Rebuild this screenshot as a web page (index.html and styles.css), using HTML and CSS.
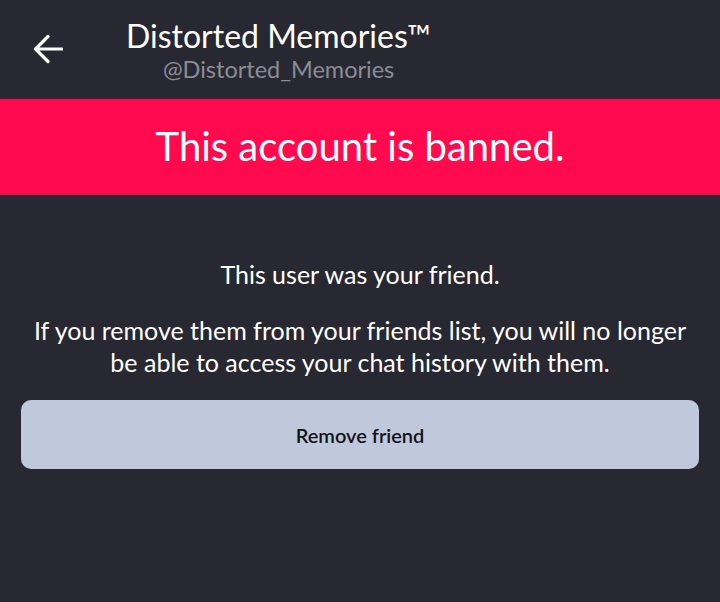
FILE: index.html
```html
<!DOCTYPE html>
<html>
  <head>
    <title>Distorted Memories</title>
    <meta charset='UTF-8'>
    <link rel="stylesheet" href="styles.css">
  </head>
  <body>
    <header class='topBar'>
      <button class='backButton' aria-label='Back'>
        <svg width='30' height='30' viewBox='0 0 30 30'>
          <path d='M29 15H2.5M15 2.5L2.5 15L15 27.5' fill='none' stroke='#fff' stroke-width='3.2' stroke-linecap='round' stroke-linejoin='round'/>
        </svg>
      </button>
      <div class='userInfo'>
        <h1 class='displayName'>Distorted Memories™</h1>
        <p class='handle'>@Distorted_Memories</p>
      </div>
    </header>

    <div class='bannedBanner'>This account is banned.</div>

    <main class='friendNotice'>
      <p class='noticeTitle'>This user was your friend.</p>
      <p class='noticeText'>If you remove them from your friends list, you will no longer be able to access your chat history with them.</p>
      <button class='removeButton'>Remove friend</button>
    </main>
  </body>
</html>
```

FILE: styles.css
```css
:root {
  font-family: Lato, "Noto Sans", sans-serif;
  background-color: #272832;
  color: #ffffff;
}

body {
  margin: 0;
  min-height: 100vh;
}

.topBar {
  display: flex;
  align-items: flex-start;
  height: 99px;
  box-sizing: border-box;
  padding-top: 17px;
}

.backButton {
  width: 30px;
  height: 30px;
  margin-left: 33px;
  margin-top: 17px;
  padding: 0;
  border: none;
  background: none;
}

.userInfo {
  margin-left: 63px;
  display: flex;
  flex-direction: column;
  align-items: center;
}

.displayName {
  margin: 0;
  font-size: 32px;
  font-weight: 400;
  line-height: 38px;
}

.handle {
  margin: 0;
  font-size: 23.5px;
  line-height: 28px;
  color: #8b8d96;
}

.bannedBanner {
  height: 96px;
  background-color: #ff0a4f;
  display: flex;
  align-items: center;
  justify-content: center;
  font-size: 40px;
  padding-bottom: 2px;
  box-sizing: border-box;
}

.friendNotice {
  padding: 63px 21px 0;
  text-align: center;
}

.noticeTitle {
  margin: 0 0 24px;
  font-size: 25px;
  line-height: 32px;
}

.noticeText {
  margin: 0 8px 22px;
  font-size: 25px;
  line-height: 32px;
}

.removeButton {
  width: 100%;
  height: 69px;
  border: none;
  border-radius: 10px;
  background-color: #c0c8db;
  color: #111218;
  font-family: inherit;
  font-size: 20px;
  font-weight: 600;
}
```
